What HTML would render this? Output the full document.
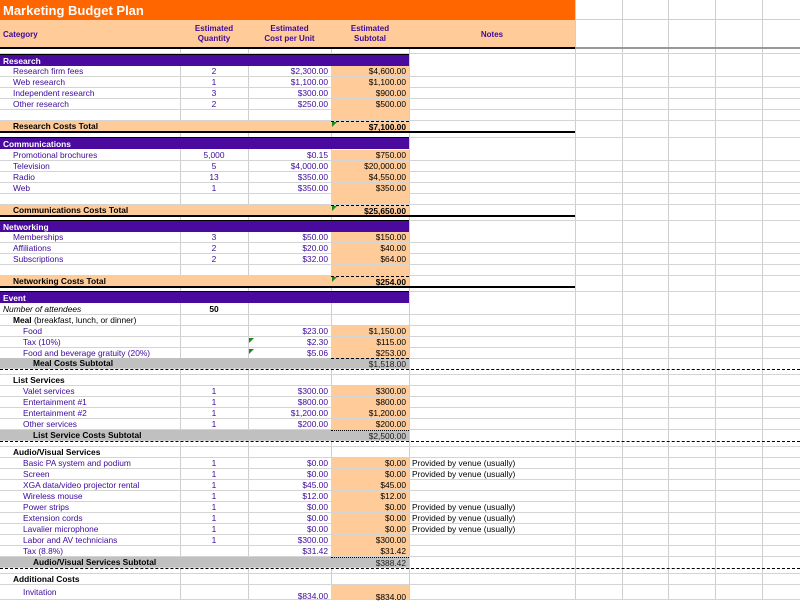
<!DOCTYPE html><html><head><meta charset="utf-8"><style>
*{margin:0;padding:0;box-sizing:border-box}
body{width:800px;height:600px;overflow:hidden;background:#fff;font-family:"Liberation Sans",Tahoma,sans-serif;font-size:8.4px;color:#3d0a9a;position:relative}
.v{position:absolute;top:0;height:600px;width:1px;background:#cfcfcf}
.r{position:absolute;left:0;width:800px;height:11px;border-bottom:1px solid #d4d4d4;line-height:10px;white-space:nowrap}
.r>div{position:absolute;top:0;height:100%}
.a{left:0;width:180px}.b{left:180px;width:68px;text-align:center}.c{left:248px;width:83px;text-align:right;padding-right:3px}.d{left:331px;width:78px;text-align:right;padding-right:3px}.e{left:409px;width:166px;padding-left:3px}
.pk{background:#ffcc99}
.i1{padding-left:13px}.i2{padding-left:23px}.i3{padding-left:33px}
.bar{position:absolute;left:0;width:409px;height:12px;background:#4a0a9e;color:#fff;font-weight:bold;padding-left:3px;line-height:12px;border-top:1px solid #000}
.blk{position:absolute;left:0;width:575px;height:2px;background:#000}
.tot{background:#ffcc99;color:#000;font-weight:bold}
.gr{background:#c0c0c0;color:#1a1a1a}
.dash{position:absolute;left:0;width:800px;height:0;border-top:1.5px dashed #000}
.tri{position:absolute;width:0;height:0;border-top:5px solid #1a8a1a;border-right:5px solid transparent}
.k{color:#000}
</style></head><body>
<div class="v" style="left:180px"></div><div class="v" style="left:248px"></div><div class="v" style="left:331px"></div><div class="v" style="left:409px"></div><div class="v" style="left:575px"></div><div class="v" style="left:622px"></div><div class="v" style="left:668px"></div><div class="v" style="left:715px"></div><div class="v" style="left:762px"></div>
<div style="position:absolute;left:0;top:0;width:800px;height:20px;border-bottom:1px solid #cfcfcf"></div>
<div style="position:absolute;left:0;top:0;width:575px;height:20px;background:#ff6600;color:#fff;font-weight:bold;font-size:13px;line-height:21px;padding-left:3px">Marketing Budget Plan</div>
<div style="position:absolute;left:0;top:47px;width:800px;height:2px;background:#999"></div>
<div style="position:absolute;left:0;top:20px;width:575px;height:27px;background:#ffcc99;font-weight:bold;font-size:8px">
<div style="position:absolute;left:3px;top:10px">Category</div>
<div style="position:absolute;left:180px;width:68px;top:4px;text-align:center;line-height:10px">Estimated<br>Quantity</div>
<div style="position:absolute;left:248px;width:83px;top:4px;text-align:center;line-height:10px">Estimated<br>Cost per Unit</div>
<div style="position:absolute;left:331px;width:78px;top:4px;text-align:center;line-height:10px">Estimated<br>Subtotal</div>
<div style="position:absolute;left:409px;width:166px;top:10px;text-align:center">Notes</div></div>
<div class="blk" style="top:47px"></div>
<div class="r" style="top:49px;height:5px"></div>

<div class="bar" style="top:54px">Research</div>
<div class="r" style="top:66px"><div class="a i1">Research firm fees</div><div class="b">2</div><div class="c">$2,300.00</div><div class="d pk k">$4,600.00</div></div>
<div class="r" style="top:77px"><div class="a i1">Web research</div><div class="b">1</div><div class="c">$1,100.00</div><div class="d pk k">$1,100.00</div></div>
<div class="r" style="top:88px"><div class="a i1">Independent research</div><div class="b">3</div><div class="c">$300.00</div><div class="d pk k">$900.00</div></div>
<div class="r" style="top:99px"><div class="a i1">Other research</div><div class="b">2</div><div class="c">$250.00</div><div class="d pk k">$500.00</div></div>
<div class="r" style="top:110px"><div class="d pk"></div></div>
<div class="r tot" style="top:121px;width:409px"><div class="a i1">Research Costs Total</div><div class="d" style="border-top:1.5px dashed #000">$7,100.00</div></div>
<div class="tri" style="left:332px;top:122px"></div>
<div class="blk" style="top:131px"></div>
<div class="r" style="top:133px;height:5px"></div>

<div class="bar" style="top:137px">Communications</div>
<div class="r" style="top:150px"><div class="a i1">Promotional brochures</div><div class="b">5,000</div><div class="c">$0.15</div><div class="d pk k">$750.00</div></div>
<div class="r" style="top:161px"><div class="a i1">Television</div><div class="b">5</div><div class="c">$4,000.00</div><div class="d pk k">$20,000.00</div></div>
<div class="r" style="top:172px"><div class="a i1">Radio</div><div class="b">13</div><div class="c">$350.00</div><div class="d pk k">$4,550.00</div></div>
<div class="r" style="top:183px"><div class="a i1">Web</div><div class="b">1</div><div class="c">$350.00</div><div class="d pk k">$350.00</div></div>
<div class="r" style="top:194px"><div class="d pk"></div></div>
<div class="r tot" style="top:205px;width:409px"><div class="a i1">Communications Costs Total</div><div class="d" style="border-top:1.5px dashed #000">$25,650.00</div></div>
<div class="tri" style="left:332px;top:206px"></div>
<div class="blk" style="top:215px"></div>
<div class="r" style="top:217px;height:4px"></div>

<div class="bar" style="top:220px">Networking</div>
<div class="r" style="top:232px"><div class="a i1">Memberships</div><div class="b">3</div><div class="c">$50.00</div><div class="d pk k">$150.00</div></div>
<div class="r" style="top:243px"><div class="a i1">Affiliations</div><div class="b">2</div><div class="c">$20.00</div><div class="d pk k">$40.00</div></div>
<div class="r" style="top:254px"><div class="a i1">Subscriptions</div><div class="b">2</div><div class="c">$32.00</div><div class="d pk k">$64.00</div></div>
<div class="r" style="top:265px"><div class="d pk"></div></div>
<div class="r tot" style="top:276px;width:409px"><div class="a i1">Networking Costs Total</div><div class="d" style="border-top:1.5px dashed #000">$254.00</div></div>
<div class="tri" style="left:332px;top:277px"></div>
<div class="blk" style="top:286px"></div>
<div class="r" style="top:288px;height:4px"></div>

<div class="bar" style="top:291px">Event</div>
<div class="r" style="top:304px"><div class="a" style="padding-left:3px;font-style:italic;color:#000">Number of attendees</div><div class="b k" style="font-weight:bold">50</div></div>
<div class="r" style="top:315px"><div class="a i1 k"><b>Meal</b> (breakfast, lunch, or dinner)</div></div>
<div class="r" style="top:326px"><div class="a i2">Food</div><div class="c">$23.00</div><div class="d pk k">$1,150.00</div></div>
<div class="r" style="top:337px"><div class="a i2">Tax (10%)</div><div class="c">$2.30</div><div class="d pk k">$115.00</div></div>
<div class="r" style="top:348px"><div class="a i2">Food and beverage gratuity (20%)</div><div class="c">$5.06</div><div class="d pk k">$253.00</div></div>
<div class="tri" style="left:249px;top:338px"></div><div class="tri" style="left:249px;top:349px"></div>
<div class="r gr" style="top:358px;width:409px"><div class="a i3" style="font-weight:bold;color:#000">Meal Costs Subtotal</div><div class="d" style="border-top:1.5px dashed #000">$1,518.00</div></div>
<div class="dash" style="top:369px"></div>
<div class="r" style="top:370px;height:5px"></div>

<div class="r" style="top:375px"><div class="a i1 k" style="font-weight:bold">List Services</div></div>
<div class="r" style="top:386px"><div class="a i2">Valet services</div><div class="b">1</div><div class="c">$300.00</div><div class="d pk k">$300.00</div></div>
<div class="r" style="top:397px"><div class="a i2">Entertainment #1</div><div class="b">1</div><div class="c">$800.00</div><div class="d pk k">$800.00</div></div>
<div class="r" style="top:408px"><div class="a i2">Entertainment #2</div><div class="b">1</div><div class="c">$1,200.00</div><div class="d pk k">$1,200.00</div></div>
<div class="r" style="top:419px"><div class="a i2">Other services</div><div class="b">1</div><div class="c">$200.00</div><div class="d pk k">$200.00</div></div>
<div class="r gr" style="top:430px;width:409px"><div class="a i3" style="font-weight:bold;color:#000">List Service Costs Subtotal</div><div class="d" style="border-top:1.5px dotted #000">$2,500.00</div></div>
<div class="dash" style="top:441px"></div>
<div class="r" style="top:442px;height:5px"></div>

<div class="r" style="top:447px"><div class="a i1 k" style="font-weight:bold">Audio/Visual Services</div></div>
<div class="r" style="top:458px"><div class="a i2">Basic PA system and podium</div><div class="b">1</div><div class="c">$0.00</div><div class="d pk k">$0.00</div><div class="e k">Provided by venue (usually)</div></div>
<div class="r" style="top:469px"><div class="a i2">Screen</div><div class="b">1</div><div class="c">$0.00</div><div class="d pk k">$0.00</div><div class="e k">Provided by venue (usually)</div></div>
<div class="r" style="top:480px"><div class="a i2">XGA data/video projector rental</div><div class="b">1</div><div class="c">$45.00</div><div class="d pk k">$45.00</div></div>
<div class="r" style="top:491px"><div class="a i2">Wireless mouse</div><div class="b">1</div><div class="c">$12.00</div><div class="d pk k">$12.00</div></div>
<div class="r" style="top:502px"><div class="a i2">Power strips</div><div class="b">1</div><div class="c">$0.00</div><div class="d pk k">$0.00</div><div class="e k">Provided by venue (usually)</div></div>
<div class="r" style="top:513px"><div class="a i2">Extension cords</div><div class="b">1</div><div class="c">$0.00</div><div class="d pk k">$0.00</div><div class="e k">Provided by venue (usually)</div></div>
<div class="r" style="top:524px"><div class="a i2">Lavalier microphone</div><div class="b">1</div><div class="c">$0.00</div><div class="d pk k">$0.00</div><div class="e k">Provided by venue (usually)</div></div>
<div class="r" style="top:535px"><div class="a i2">Labor and AV technicians</div><div class="b">1</div><div class="c">$300.00</div><div class="d pk k">$300.00</div></div>
<div class="r" style="top:546px"><div class="a i2">Tax (8.8%)</div><div class="c">$31.42</div><div class="d pk k">$31.42</div></div>
<div class="r gr" style="top:557px;width:409px"><div class="a i3" style="font-weight:bold;color:#000">Audio/Visual Services Subtotal</div><div class="d" style="border-top:1.5px dotted #000">$388.42</div></div>
<div class="dash" style="top:568px"></div>
<div class="r" style="top:569px;height:5px"></div>

<div class="r" style="top:574px"><div class="a i1 k" style="font-weight:bold">Additional Costs</div></div>
<div class="r" style="top:585px;height:15px"><div class="a i2" style="line-height:14px">Invitation</div><div class="c" style="top:6px">$834.00</div><div class="d pk k" style="line-height:24px">$834.00</div></div>
</body></html>
